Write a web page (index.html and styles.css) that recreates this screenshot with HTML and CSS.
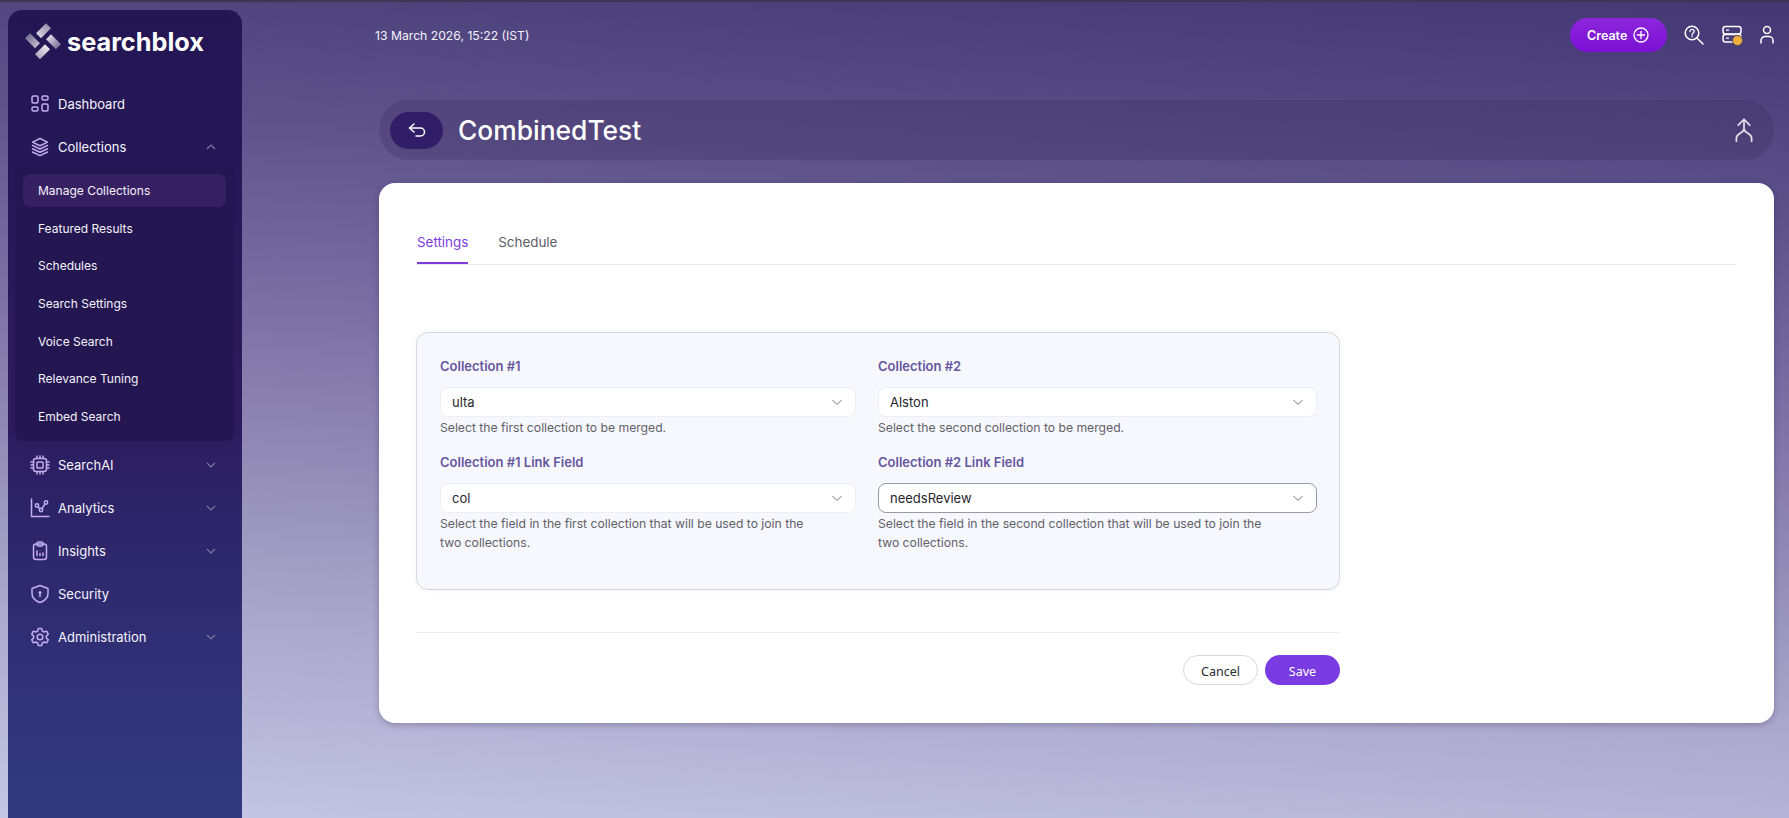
FILE: index.html
```html
<!DOCTYPE html>
<html lang="en">
<head>
<meta charset="utf-8">
<title>CombinedTest</title>
<link rel="stylesheet" href="styles.css">
</head>
<body>
<div class="page">
  <aside class="sidebar">
    <div class="logo">
      <svg class="logo-mark" viewBox="-20 -20.300 40 40" width="40" height="40">
        <defs>
          <linearGradient id="lgTop" x1="0" y1="1" x2="1" y2="0"><stop offset="0" stop-color="#e4e1eb"/><stop offset="1" stop-color="#8a84a2"/></linearGradient>
          <linearGradient id="lgRight" x1="0" y1="0" x2="1" y2="1"><stop offset="0" stop-color="#f4f2f7"/><stop offset="1" stop-color="#625b88"/></linearGradient>
          <linearGradient id="lgBottom" x1="1" y1="0" x2="0" y2="1"><stop offset="0" stop-color="#f8f6fa"/><stop offset="1" stop-color="#a09bb4"/></linearGradient>
          <linearGradient id="lgLeft" x1="1" y1="1" x2="0" y2="0"><stop offset="0" stop-color="#cfcbda"/><stop offset="1" stop-color="#665f8a"/></linearGradient>
        </defs>
        <polygon points="-7,-8 3,-18 8,-13 -2,-3" fill="url(#lgTop)"/>
        <polygon points="8,-7 18,3 13,8 3,-2" fill="url(#lgRight)"/>
        <polygon points="7,8 -3,18 -8,13 2,3" fill="url(#lgBottom)"/>
        <polygon points="-8,7 -18,-3 -13,-8 -3,2" fill="url(#lgLeft)"/>
      </svg>
      <span class="logo-text">searchblox</span>
    </div>
    <nav class="nav">
      <a class="nav-item">
        <svg class="nav-icon" viewBox="0 0 20 20"><rect x="2" y="2" width="6" height="7" rx="1.500"/><rect x="12" y="2" width="6" height="4" rx="1.500"/><rect x="2" y="13" width="6" height="4" rx="1.500"/><rect x="12" y="10" width="6" height="7" rx="1.500"/></svg>
        <span class="nav-label">Dashboard</span>
      </a>
      <a class="nav-item">
        <svg class="nav-icon" viewBox="0 0 20 20"><path d="M10 1.500l7.500 3.600L10 8.700 2.500 5.100z"/><path d="M2.500 8.400L10 12l7.500-3.600"/><path d="M2.500 11.700l7.500 3.600 7.500-3.600"/><path d="M2.500 15l7.500 3.600 7.500-3.600"/></svg>
        <span class="nav-label">Collections</span>
        <svg class="chev" viewBox="0 0 12 12"><path d="M2 8l4-4 4 4"/></svg>
      </a>
      <div class="subnav">
        <a class="sub-item active">Manage Collections</a>
        <a class="sub-item">Featured Results</a>
        <a class="sub-item">Schedules</a>
        <a class="sub-item">Search Settings</a>
        <a class="sub-item">Voice Search</a>
        <a class="sub-item">Relevance Tuning</a>
        <a class="sub-item">Embed Search</a>
      </div>
      <a class="nav-item">
        <svg class="nav-icon" viewBox="0 0 20 20"><rect x="3.500" y="3.500" width="13" height="13" rx="2.500"/><rect x="7" y="7" width="6" height="6" rx=".8"/><path d="M7 1v2.500M10 1v2.500M13 1v2.500M7 16.500V19M10 16.500V19M13 16.500V19M1 7h2.500M1 10h2.500M1 13h2.500M16.500 7H19M16.500 10H19M16.500 13H19"/></svg>
        <span class="nav-label">SearchAI</span>
        <svg class="chev" viewBox="0 0 12 12"><path d="M2 4l4 4 4-4"/></svg>
      </a>
      <a class="nav-item">
        <svg class="nav-icon" viewBox="0 0 20 20"><path d="M1.500 1v17.500H19"/><circle cx="7" cy="7.500" r="1.700"/><circle cx="11" cy="12" r="1.700"/><circle cx="16" cy="4.500" r="1.700"/><path d="M8.100 8.800l1.800 1.900M12 10.500l3-4.500"/></svg>
        <span class="nav-label">Analytics</span>
        <svg class="chev" viewBox="0 0 12 12"><path d="M2 4l4 4 4-4"/></svg>
      </a>
      <a class="nav-item">
        <svg class="nav-icon" viewBox="0 0 20 20"><rect x="3.500" y="3" width="13" height="15.500" rx="2.500"/><rect x="7" y="1" width="6" height="4" rx="1.500"/><path d="M7 10v4.500M10 12.500v2M13 12v2.500"/></svg>
        <span class="nav-label">Insights</span>
        <svg class="chev" viewBox="0 0 12 12"><path d="M2 4l4 4 4-4"/></svg>
      </a>
      <a class="nav-item">
        <svg class="nav-icon" viewBox="0 0 20 20"><path d="M10 1.500l8 3v5c0 4.500-3.500 7.500-8 9-4.500-1.500-8-4.500-8-9v-5z"/><circle class="solid" cx="10" cy="8.500" r="1.500"/><path d="M10 9v3.500"/></svg>
        <span class="nav-label">Security</span>
      </a>
      <a class="nav-item">
        <svg class="nav-icon" viewBox="0 0 20 20"><circle cx="10" cy="10" r="2.800"/><path d="M8.300 1.500h3.400l.6 2.500 1.800 1 2.500-.8 1.700 3-1.900 1.700v2.200l1.900 1.700-1.700 3-2.500-.8-1.800 1-.6 2.500H8.300l-.6-2.500-1.800-1-2.500.8-1.700-3 1.900-1.700V8.900L1.700 7.200l1.700-3 2.500.8 1.800-1z"/></svg>
        <span class="nav-label">Administration</span>
        <svg class="chev" viewBox="0 0 12 12"><path d="M2 4l4 4 4-4"/></svg>
      </a>
    </nav>
  </aside>
  <main class="main">
    <header class="topbar">
      <span class="date">13 March 2026, 15:22 (IST)</span>
      <div class="top-actions">
        <button class="create">Create
          <svg viewBox="0 0 16 16" width="16" height="16"><circle cx="8" cy="8" r="7"/><path d="M8 4.500v7M4.500 8h7"/></svg>
        </button>
        <svg class="top-icon help-icon" viewBox="0 0 20 20" width="20" height="20"><circle cx="8" cy="8" r="6.800"/><path d="M13 13l6 6"/><path class="thin" d="M6 6.500c0-2.800 4.200-2.800 4.200 0 0 1.500-2.100 1.500-2.100 3M8.100 10.800v.9"/></svg>
        <span class="server">
          <svg class="top-icon" viewBox="0 0 20 20" width="20" height="20"><rect x="1" y="1.500" width="18" height="7.500" rx="2.500"/><rect x="1" y="9.500" width="18" height="7.500" rx="2.500"/><path class="thin" d="M4.500 5.200h2M4.500 13.200h2"/></svg>
          <span class="badge"></span>
        </span>
        <svg class="top-icon user" viewBox="0 0 14 20" width="14" height="20"><circle cx="7" cy="5" r="3.500"/><path d="M1 18v-2.500a4 4 0 0 1 4-4h4a4 4 0 0 1 4 4V18"/></svg>
      </div>
    </header>
    <section class="title-bar">
      <button class="back">
        <svg viewBox="0 0 18 14" width="18" height="14"><path d="M6 1L1.500 5 6 9"/><path d="M2 5h10.500a4 4 0 0 1 0 8H8"/></svg>
      </button>
      <h1 class="title">CombinedTest</h1>
      <svg class="merge" viewBox="0 0 20 28" width="18" height="25"><path d="M3.500 8L10 1.500 16.500 8"/><path d="M10 2v11"/><path d="M1.500 26v-4c0-5 8.500-5 8.500-10 0 5 8.500 5 8.500 10v4"/></svg>
    </section>
    <section class="card">
      <div class="tabs">
        <a class="tab current">Settings</a>
        <a class="tab">Schedule</a>
      </div>
      <div class="form-wrap">
        <form class="panel">
          <div class="field">
            <label class="label">Collection #1</label>
            <div class="select"><span>ulta</span><svg class="sel-chev" viewBox="0 0 12 12"><path d="M1.500 4l4.500 4.500L10.500 4"/></svg></div>
            <p class="help">Select the first collection to be merged.</p>
          </div>
          <div class="field">
            <label class="label">Collection #2</label>
            <div class="select"><span>Alston</span><svg class="sel-chev" viewBox="0 0 12 12"><path d="M1.500 4l4.500 4.500L10.500 4"/></svg></div>
            <p class="help">Select the second collection to be merged.</p>
          </div>
          <div class="field">
            <label class="label">Collection #1 Link Field</label>
            <div class="select"><span>col</span><svg class="sel-chev" viewBox="0 0 12 12"><path d="M1.500 4l4.500 4.500L10.500 4"/></svg></div>
            <p class="help">Select the field in the first collection that will be used to join the two collections.</p>
          </div>
          <div class="field">
            <label class="label">Collection #2 Link Field</label>
            <div class="select focus"><span>needsReview</span><svg class="sel-chev" viewBox="0 0 12 12"><path d="M1.500 4l4.500 4.500L10.500 4"/></svg></div>
            <p class="help">Select the field in the second collection that will be used to join the two collections.</p>
          </div>
        </form>
        <div class="actions">
          <button class="btn cancel">Cancel</button>
          <button class="btn save">Save</button>
        </div>
      </div>
    </section>
  </main>
</div>
</body>
</html>
```
FILE: styles.css
```css
* { box-sizing: border-box; }
html, body { margin: 0; height: 100%; overflow: hidden; }
body {
  font-family: Inter, "Noto Sans", sans-serif;
  background: linear-gradient(184deg, #433774 0%, #5e528b 24%, #7d72a5 45%, #aba9cc 78%, #c6c6e5 100%);
  border-top: 2px solid #43354f;
}
.page { display: flex; height: 816px; padding: 8px 15px 0 8px; }

.sidebar {
  width: 234px;
  flex: none;
  border-radius: 14px 14px 0 0;
  background: linear-gradient(180deg, #231653 0%, #2b1b5e 50%, #2f2a70 70%, #323b80 100%);
  margin-bottom: -10px;
}
.logo { display: flex; align-items: center; height: 38px; margin: 12px 0 0 15px; gap: 4px; }
.logo-mark { flex: none; }
.logo-text { font-weight: 700; font-size: 25.300px; color: #fff; }
.nav { margin-top: 22px; }
.nav-item {
  display: flex;
  align-items: center;
  height: 43px;
  padding: 0 25px 0 22px;
  color: #f6f4fc;
  font-size: 13px;
}
.nav-icon {
  width: 20px; height: 20px; flex: none;
  fill: none; stroke: #c2aeee; stroke-width: 1.500;
  stroke-linecap: round; stroke-linejoin: round;
}
.nav-icon .solid { fill: #c2aeee; stroke: none; }
.nav-label { margin-left: 8px; flex: 1; }
.chev { width: 12px; height: 12px; fill: none; stroke: #7b7a9c; stroke-width: 1.200; }
.subnav {
  margin: -1px 8px 2px 7px;
  height: 274px;
  padding: 7px 8px 0;
  background: #241650;
  border-radius: 0 0 8px 8px;
}
.sub-item {
  display: flex;
  align-items: center;
  height: 33px;
  margin-bottom: 4.670px;
  padding-left: 15px;
  border-radius: 7px;
  color: #f4f2fb;
  font-size: 12px;
}
.sub-item.active { background: #372062; }

.main { flex: 1; min-width: 0; margin-left: 137px; }
.topbar { display: flex; align-items: center; justify-content: space-between; height: 34px; margin-top: 8px; }
.date { color: #f4f2fb; font-size: 12.200px; margin-left: -4px; }
.top-actions { display: flex; align-items: center; }
.create {
  display: flex; align-items: center; gap: 6px;
  height: 34px; width: 97px; padding: 0 0 0 17px;
  border: 0; border-radius: 17px;
  background: linear-gradient(180deg, #8d27dc, #7a10d4);
  color: #fff; font: 600 12.500px Inter, sans-serif;
}
.create svg { fill: none; stroke: #fff; stroke-width: 1.300; stroke-linecap: round; }
.top-icon { fill: none; stroke: #fff; stroke-width: 1.500; stroke-linecap: round; }
.top-icon .thin { stroke-width: 1.300; }
.help-icon { margin-left: 17px; }
.server { position: relative; display: flex; margin-left: 18px; }
.badge { position: absolute; width: 11px; height: 11px; right: -1px; bottom: -1px; border-radius: 50%; background: #efb03e; border: 1px solid #5b4a52; }
.user { margin-left: 18px; }

.title-bar {
  display: flex; align-items: center;
  height: 60px; margin-top: 48px;
  padding: 0 21px 0 11px;
  border-radius: 30px;
  background: rgba(52, 38, 88, .25);
}
.back {
  display: flex; align-items: center; justify-content: center;
  width: 53px; height: 37px;
  border: 0; border-radius: 19px;
  background: #301e68;
}
.back svg { fill: none; stroke: #fff; stroke-width: 1.500; stroke-linecap: round; stroke-linejoin: round; }
.title { flex: 1; margin: 0 0 0 15px; color: #fff; font-size: 26.400px; font-weight: 500; }
.merge { fill: none; stroke: #dedbe6; stroke-width: 2; stroke-linecap: round; stroke-linejoin: round; }

.card {
  height: 540px; margin-top: 23px;
  padding: 48px 38px 0 38px;
  border-radius: 16px;
  background: #fff;
  box-shadow: 0 2px 6px rgba(40, 30, 80, .3);
}
.tabs { display: flex; gap: 30px; height: 34px; border-bottom: 1px solid #e6e6ee; }
.tab { height: 33px; color: #5e5e66; font-size: 13.400px; padding-top: 3px; }
.tab.current { color: #7c3ce0; border-bottom: 2px solid #7c3ae0; }
.form-wrap { width: 924px; margin-top: 67px; margin-left: -1px; }
.panel {
  display: grid;
  grid-template-columns: 416px 439px;
  column-gap: 22px;
  align-content: start;
  height: 258px;
  padding: 23px 22px 0 23px;
  border: 1px solid #d6d6df;
  border-radius: 12px;
  background: #f7f8fd;
  box-shadow: 0 0 6px rgba(60, 60, 100, .06);
}
.label { display: block; color: #65569f; font-size: 13px; font-weight: 600; line-height: 20px; margin-bottom: 11px; }
.select {
  display: flex; align-items: center; justify-content: space-between;
  height: 30px; padding: 0 12px 0 11px;
  border: 1px solid #ededf4;
  border-radius: 8px;
  background: #fff;
  color: #26262c;
  font-size: 13px;
}
.select.focus { border-color: #9a9aa2; }
.sel-chev { width: 12px; height: 12px; fill: none; stroke: #77777f; stroke-width: 1; }
.help { margin: 0 0 15px; max-width: 387px; color: #5f6068; font-size: 12.180px; line-height: 19px; padding-top: 1px; }
.actions {
  display: flex; justify-content: flex-end; gap: 7px;
  margin-top: 42px; padding-top: 22px;
  border-top: 1px solid #ebebf1;
}
.btn { width: 75px; height: 30px; padding-top: 3px; border-radius: 15px; font: 400 12.500px "Noto Sans", sans-serif; }
.cancel { background: #fff; border: 1px solid #d8d8dc; color: #2a2a33; }
.save { background: #7a3ce2; border: 0; color: #fff; }
```
